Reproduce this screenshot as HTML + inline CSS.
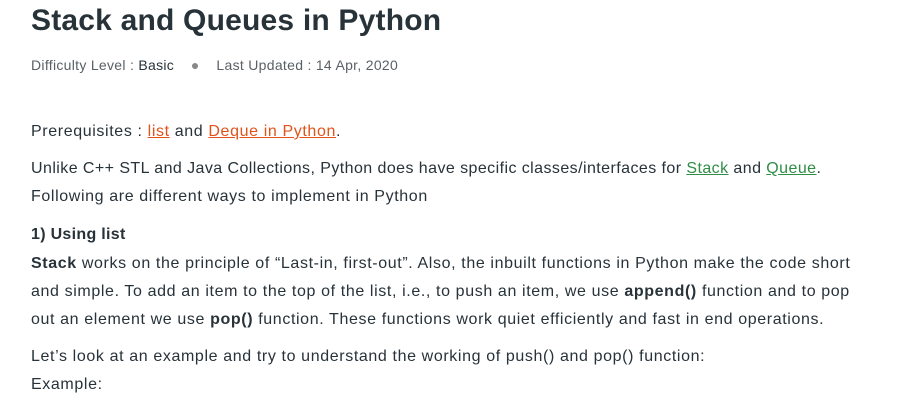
<!DOCTYPE html>
<html><head><meta charset="utf-8"><style>
body{margin:0;width:915px;height:411px;background:#fff;overflow:hidden;font-family:"Liberation Sans",sans-serif;color:#273239;}
.l{position:absolute;left:31px;white-space:nowrap;font-size:16px;line-height:20px;letter-spacing:0.62px}
h1{position:absolute;left:31px;top:1px;margin:0;font-size:30px;line-height:40px;font-weight:bold;color:#273239;letter-spacing:0.2px}
.meta{position:absolute;left:31px;top:57px;font-size:14px;color:#5a6166;white-space:nowrap;letter-spacing:0.3px}
.meta b{font-weight:normal;color:#273239}
a.o{color:#e0531a;text-decoration:underline}
a.g{color:#2f8d46;text-decoration:underline}
</style></head><body>
<h1>Stack and Queues in Python</h1>
<div class="meta">Difficulty Level : <b>Basic</b> &nbsp;&nbsp; <span style="color:#888">●</span> &nbsp;&nbsp; Last Updated : 14 Apr, 2020</div>
<div class="l" style="top:122px">Prerequisites : <a class="o">list</a> and <a class="o">Deque in Python</a>.</div>
<div class="l" style="top:159px;letter-spacing:0.43px">Unlike C++ STL and Java Collections, Python does have specific classes/interfaces for <a class="g">Stack</a> and <a class="g">Queue</a>.</div>
<div class="l" style="top:187px">Following are different ways to implement in Python</div>
<div class="l" style="top:225px;font-weight:bold;letter-spacing:0.3px">1) Using list</div>
<div class="l" style="top:254px"><b>Stack</b> works on the principle of “Last-in, first-out”. Also, the inbuilt functions in Python make the code short</div>
<div class="l" style="top:282px">and simple. To add an item to the top of the list, i.e., to push an item, we use <b>append()</b> function and to pop</div>
<div class="l" style="top:310px">out an element we use <b>pop()</b> function. These functions work quiet efficiently and fast in end operations.</div>
<div class="l" style="top:347px">Let’s look at an example and try to understand the working of push() and pop() function:</div>
<div class="l" style="top:375px">Example:</div>
</body></html>
